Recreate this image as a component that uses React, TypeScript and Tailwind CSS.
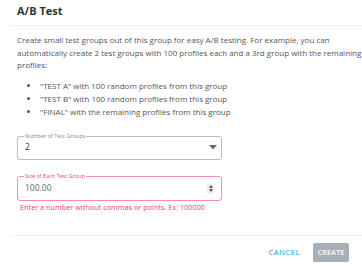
export default function App() {
  return (
    <div className="w-[362px] h-[266px] bg-white overflow-hidden font-['Open_Sans',sans-serif] text-[#555]">
      <div className="pl-[17px] pt-[4px] h-[25px] text-[11px] font-bold text-[#333] leading-[14px]">A/B Test</div>
      <div className="ml-[10px] border-t border-[#eeeeee]" />
      <div className="pl-[17px] pt-[8px]">
        <p className="text-[8px] leading-[12.5px]">
          Create small test groups out of this group for easy A/B testing. For example, you can automatically create 2 test groups with 100 profiles each and a 3rd group with the remaining profiles:
        </p>
        <ul className="list-disc pl-[23px] mt-[7px] text-[8px] leading-[13px]">
          <li>"TEST A" with 100 random profiles from this group</li>
          <li>"TEST B" with 100 random profiles from this group</li>
          <li>"FINAL" with the remaining profiles from this group</li>
        </ul>
        <div className="mt-[18px] relative w-[205px] h-[24px] border border-[#bdbdbd] rounded-[3px] flex items-center pl-[7px] pr-[4px]">
          <span className="absolute left-[6px] top-[-4px] bg-white px-[1px] text-[5.5px] leading-[7px] text-[#888]">Number of Test Groups</span>
          <span className="text-[8.5px] text-[#333] flex-1">2</span>
          <svg width="8" height="5" viewBox="0 0 8 5"><path d="M0 0 L8 0 L4 4.5 Z" fill="#666" /></svg>
        </div>
        <div className="mt-[16px] relative w-[205px] h-[25px] border border-[#f48fb1] rounded-[3px] flex items-center pl-[7px] pr-[7px]">
          <span className="absolute left-[6px] top-[-4px] bg-white px-[1px] text-[5.5px] leading-[7px] text-[#ec407a]">Size of Each Test Group</span>
          <span className="text-[8.5px] text-[#666] flex-1">100.00</span>
          <span className="w-[7px] h-[11px] bg-[#eeeeee] flex flex-col items-center justify-center gap-[1px]">
            <svg width="4" height="3" viewBox="0 0 4 3"><path d="M0 3 L4 3 L2 0 Z" fill="#555" /></svg>
            <svg width="4" height="3" viewBox="0 0 4 3"><path d="M0 0 L4 0 L2 3 Z" fill="#555" /></svg>
          </span>
        </div>
        <div className="pl-[3px] mt-[1px] text-[7.3px] leading-[11px] text-[#ec407a]">Enter a number without commas or points. Ex: 100000</div>
      </div>
      <div className="ml-[10px] mt-[22px] border-t border-[#eeeeee]" />
      <div className="flex justify-end items-center gap-[13px] pr-[13px] pt-[7px]">
        <button className="text-[8px] font-medium tracking-[0.3px] text-[#2196f3]">CANCEL</button>
        <button className="w-[36px] h-[19px] rounded-[2px] bg-[#a7aeb6] text-[7.3px] font-bold text-[#eef0f2]">CREATE</button>
      </div>
    </div>
  );
}
